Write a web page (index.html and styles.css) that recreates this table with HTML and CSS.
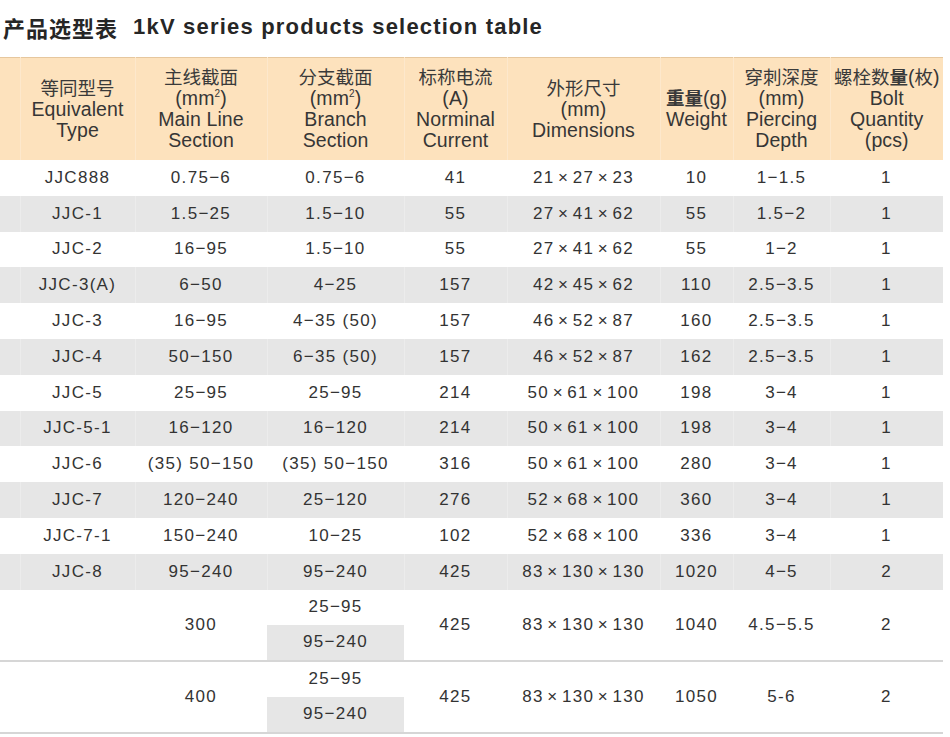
FILE: index.html
```html
<!DOCTYPE html>
<html lang="zh">
<head>
<meta charset="utf-8">
<title>1kV series products selection table</title>
<link rel="stylesheet" href="styles.css">
</head>
<body>
<div class="page">
  <h1 class="title"><span class="cn">产品选型表</span><span class="en">1kV series products selection table</span></h1>
  <table class="sel">
    <colgroup>
      <col class="w0"><col class="w1"><col class="w2"><col class="w3"><col class="w4"><col class="w5"><col class="w6"><col class="w7"><col class="w8">
    </colgroup>
    <thead>
      <tr>
        <th></th>
        <th><span class="zh">等同型号</span><br>Equivalent<br>Type</th>
        <th><span class="zh">主线截面</span><br>(mm<sup>2</sup>)<br>Main Line<br>Section</th>
        <th><span class="zh">分支截面</span><br>(mm<sup>2</sup>)<br>Branch<br>Section</th>
        <th><span class="zh">标称电流</span><br>(A)<br>Norminal<br>Current</th>
        <th><span class="zh">外形尺寸</span><br>(mm)<br>Dimensions</th>
        <th><span class="zh b">重量</span>(g)<br>Weight</th>
        <th><span class="zh">穿刺深度</span><br>(mm)<br>Piercing<br>Depth</th>
        <th><span class="zh">螺栓数<b>量</b></span>(<span class="zh">枚</span>)<br>Bolt<br>Quantity<br>(pcs)</th>
      </tr>
    </thead>
    <tbody>
      <tr class="r"><td></td><td>JJC888</td><td>0.75−6</td><td>0.75−6</td><td>41</td><td>21<span class="x">×</span>27<span class="x">×</span>23</td><td>10</td><td>1−1.5</td><td>1</td></tr>
      <tr class="r g"><td></td><td>JJC-1</td><td>1.5−25</td><td>1.5−10</td><td>55</td><td>27<span class="x">×</span>41<span class="x">×</span>62</td><td>55</td><td>1.5−2</td><td>1</td></tr>
      <tr class="r"><td></td><td>JJC-2</td><td>16−95</td><td>1.5−10</td><td>55</td><td>27<span class="x">×</span>41<span class="x">×</span>62</td><td>55</td><td>1−2</td><td>1</td></tr>
      <tr class="r g"><td></td><td>JJC-3(A)</td><td>6−50</td><td>4−25</td><td>157</td><td>42<span class="x">×</span>45<span class="x">×</span>62</td><td>110</td><td>2.5−3.5</td><td>1</td></tr>
      <tr class="r"><td></td><td>JJC-3</td><td>16−95</td><td>4−35 (50)</td><td>157</td><td>46<span class="x">×</span>52<span class="x">×</span>87</td><td>160</td><td>2.5−3.5</td><td>1</td></tr>
      <tr class="r g"><td></td><td>JJC-4</td><td>50−150</td><td>6−35 (50)</td><td>157</td><td>46<span class="x">×</span>52<span class="x">×</span>87</td><td>162</td><td>2.5−3.5</td><td>1</td></tr>
      <tr class="r"><td></td><td>JJC-5</td><td>25−95</td><td>25−95</td><td>214</td><td>50<span class="x">×</span>61<span class="x">×</span>100</td><td>198</td><td>3−4</td><td>1</td></tr>
      <tr class="r g"><td></td><td>JJC-5-1</td><td>16−120</td><td>16−120</td><td>214</td><td>50<span class="x">×</span>61<span class="x">×</span>100</td><td>198</td><td>3−4</td><td>1</td></tr>
      <tr class="r"><td></td><td>JJC-6</td><td>(35) 50−150</td><td>(35) 50−150</td><td>316</td><td>50<span class="x">×</span>61<span class="x">×</span>100</td><td>280</td><td>3−4</td><td>1</td></tr>
      <tr class="r g"><td></td><td>JJC-7</td><td>120−240</td><td>25−120</td><td>276</td><td>52<span class="x">×</span>68<span class="x">×</span>100</td><td>360</td><td>3−4</td><td>1</td></tr>
      <tr class="r"><td></td><td>JJC-7-1</td><td>150−240</td><td>10−25</td><td>102</td><td>52<span class="x">×</span>68<span class="x">×</span>100</td><td>336</td><td>3−4</td><td>1</td></tr>
      <tr class="r g"><td></td><td>JJC-8</td><td>95−240</td><td>95−240</td><td>425</td><td>83<span class="x">×</span>130<span class="x">×</span>130</td><td>1020</td><td>4−5</td><td>2</td></tr>
      <tr class="s"><td rowspan="2" class="sep"></td><td rowspan="2" class="sep"></td><td rowspan="2" class="sep">300</td><td>25−95</td><td rowspan="2" class="sep">425</td><td rowspan="2" class="sep">83<span class="x">×</span>130<span class="x">×</span>130</td><td rowspan="2" class="sep">1040</td><td rowspan="2" class="sep">4.5−5.5</td><td rowspan="2" class="sep">2</td></tr>
      <tr class="s"><td class="sub sep">95−240</td></tr>
      <tr class="s"><td rowspan="2" class="sep"></td><td rowspan="2" class="sep"></td><td rowspan="2" class="sep">400</td><td>25−95</td><td rowspan="2" class="sep">425</td><td rowspan="2" class="sep">83<span class="x">×</span>130<span class="x">×</span>130</td><td rowspan="2" class="sep">1050</td><td rowspan="2" class="sep">5-6</td><td rowspan="2" class="sep">2</td></tr>
      <tr class="s"><td class="sub sep">95−240</td></tr>
    </tbody>
  </table>
</div>
</body>
</html>
```

FILE: styles.css
```css
html, body {
  margin: 0;
  padding: 0;
  background: #ffffff;
}

.page {
  width: 950px;
  color: #333333;
  font-family: "Liberation Sans", Arial, "Noto Sans CJK SC", sans-serif;
}

.title {
  margin: 0;
  height: 57px;
  padding-left: 3px;
  display: flex;
  align-items: center;
  box-sizing: border-box;
  padding-bottom: 3px;
  font-size: 22px;
  font-weight: bold;
  letter-spacing: 1.2px;
  color: #262626;
}

.title .cn {
  font-family: "Noto Sans CJK SC", sans-serif;
  font-size: 22px;
  letter-spacing: 1px;
}

.title .en {
  margin-left: 15px;
}

.sel {
  border-collapse: collapse;
  table-layout: fixed;
  width: 943px;
}

.w0 { width: 20px; }
.w1 { width: 115px; }
.w2 { width: 132px; }
.w3 { width: 137px; }
.w4 { width: 103px; }
.w5 { width: 153px; }
.w6 { width: 73px; }
.w7 { width: 97px; }
.w8 { width: 113px; }

.sel th {
  background: #fde2bd;
  border-top: 1px solid #e6c79e;
  border-right: 1px solid #fde8cc;
  height: 102px;
  padding: 0;
  font-weight: normal;
  font-size: 19.5px;
  line-height: 21px;
  letter-spacing: 0.1px;
  color: #363636;
  text-align: center;
  vertical-align: middle;
  white-space: nowrap;
}

.sel th:last-child {
  border-right: none;
}

.sel th sup {
  font-size: 10px;
  line-height: 0;
  vertical-align: 8px;
}

.zh {
  font-family: "Noto Sans CJK SC", sans-serif;
  font-size: 18.5px;
  line-height: 1;
  letter-spacing: 0;
  color: #3a3a3a;
}

.zh.b, .zh b {
  font-weight: bold;
}

.sel td {
  padding: 0;
  text-align: center;
  vertical-align: middle;
  font-size: 17px;
  letter-spacing: 1.3px;
  color: #333333;
  white-space: nowrap;
}

.r td {
  height: 35.8px;
}

.g td {
  background: #e6e6e6;
  border-right: 1px solid #ececec;
}

.g td:last-child {
  border-right: none;
}

.s td {
  height: 35px;
}

.s td.sub {
  background: #e6e6e6;
}

.s td.sep {
  border-bottom: 2px solid #d6d6d6;
}

.x {
  margin: 0 3.5px;
}
```
